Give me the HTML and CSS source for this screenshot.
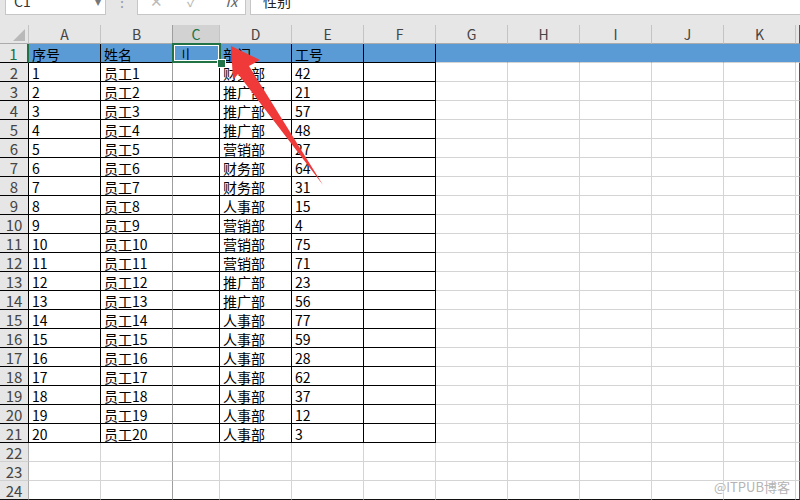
FILE: index.html
```html
<!DOCTYPE html>
<html lang="zh-CN">
<head>
    <meta charset="UTF-8">
    <title>工作簿</title>
    <link rel="stylesheet" href="styles.css">
</head>
<body>
    <div class="window">
        <div class="top">
            <div class="box name-box"><span class="cut">C1</span><span class="cut drop">▾</span></div>
            <div class="dots"><span class="cut">⋮</span></div>
            <div class="box fx-box">
                <span class="cut fx-btn">✕</span>
                <span class="cut fx-btn">✓</span>
                <span class="cut fx-btn fx">fx</span>
            </div>
            <div class="box input-box"><span class="cut">性别</span></div>
        </div>
        <table class="sheet">
            <colgroup>
                <col class="w-rh"><col class="w-a"><col class="w-a"><col class="w-c">
                <col class="w-a"><col class="w-a"><col class="w-a"><col class="w-a">
                <col class="w-a"><col class="w-a"><col class="w-a"><col class="w-a"><col class="w-l">
            </colgroup>
            <tr class="head">
                <th class="corner"><svg width="28" height="18" viewBox="0 0 28 18"><polygon points="25,4 25,16 13,16" fill="#b9b9b9"/></svg></th>
                <th class="ch">A</th><th class="ch b">B</th><th class="ch on">C</th><th class="ch">D</th><th class="ch">E</th><th class="ch">F</th>
                <th class="ch">G</th><th class="ch">H</th><th class="ch">I</th><th class="ch">J</th><th class="ch">K</th><th class="ch l"></th>
            </tr>
            <tr>
                <th class="rh k on">1</th>
                <td class="k hl">序号</td><td class="k hl">姓名</td><td class="k hl sel">刂</td><td class="k hl">部门</td><td class="k hl">工号</td><td class="k hl"></td>
                <td class="hl"></td><td class="hl"></td><td class="hl"></td><td class="hl"></td><td class="hl"></td><td class="hl l"></td>
            </tr>
            <tr><th class="rh k">2</th><td class="k">1</td><td class="k b">员工1</td><td class="k"></td><td class="k">财务部</td><td class="k">42</td><td class="k"></td><td></td><td></td><td></td><td></td><td></td><td class="l"></td></tr>
            <tr><th class="rh k">3</th><td class="k">2</td><td class="k b">员工2</td><td class="k"></td><td class="k">推广部</td><td class="k">21</td><td class="k"></td><td></td><td></td><td></td><td></td><td></td><td class="l"></td></tr>
            <tr><th class="rh k">4</th><td class="k">3</td><td class="k b">员工3</td><td class="k"></td><td class="k">推广部</td><td class="k">57</td><td class="k"></td><td></td><td></td><td></td><td></td><td></td><td class="l"></td></tr>
            <tr><th class="rh k">5</th><td class="k">4</td><td class="k b">员工4</td><td class="k"></td><td class="k">推广部</td><td class="k">48</td><td class="k"></td><td></td><td></td><td></td><td></td><td></td><td class="l"></td></tr>
            <tr><th class="rh k">6</th><td class="k">5</td><td class="k b">员工5</td><td class="k"></td><td class="k">营销部</td><td class="k">27</td><td class="k"></td><td></td><td></td><td></td><td></td><td></td><td class="l"></td></tr>
            <tr><th class="rh k">7</th><td class="k">6</td><td class="k b">员工6</td><td class="k"></td><td class="k">财务部</td><td class="k">64</td><td class="k"></td><td></td><td></td><td></td><td></td><td></td><td class="l"></td></tr>
            <tr><th class="rh k">8</th><td class="k">7</td><td class="k b">员工7</td><td class="k"></td><td class="k">财务部</td><td class="k">31</td><td class="k"></td><td></td><td></td><td></td><td></td><td></td><td class="l"></td></tr>
            <tr><th class="rh k">9</th><td class="k">8</td><td class="k b">员工8</td><td class="k"></td><td class="k">人事部</td><td class="k">15</td><td class="k"></td><td></td><td></td><td></td><td></td><td></td><td class="l"></td></tr>
            <tr><th class="rh k">10</th><td class="k">9</td><td class="k b">员工9</td><td class="k"></td><td class="k">营销部</td><td class="k">4</td><td class="k"></td><td></td><td></td><td></td><td></td><td></td><td class="l"></td></tr>
            <tr><th class="rh k">11</th><td class="k">10</td><td class="k b">员工10</td><td class="k"></td><td class="k">营销部</td><td class="k">75</td><td class="k"></td><td></td><td></td><td></td><td></td><td></td><td class="l"></td></tr>
            <tr><th class="rh k">12</th><td class="k">11</td><td class="k b">员工11</td><td class="k"></td><td class="k">营销部</td><td class="k">71</td><td class="k"></td><td></td><td></td><td></td><td></td><td></td><td class="l"></td></tr>
            <tr><th class="rh k">13</th><td class="k">12</td><td class="k b">员工12</td><td class="k"></td><td class="k">推广部</td><td class="k">23</td><td class="k"></td><td></td><td></td><td></td><td></td><td></td><td class="l"></td></tr>
            <tr><th class="rh k">14</th><td class="k">13</td><td class="k b">员工13</td><td class="k"></td><td class="k">推广部</td><td class="k">56</td><td class="k"></td><td></td><td></td><td></td><td></td><td></td><td class="l"></td></tr>
            <tr><th class="rh k">15</th><td class="k">14</td><td class="k b">员工14</td><td class="k"></td><td class="k">人事部</td><td class="k">77</td><td class="k"></td><td></td><td></td><td></td><td></td><td></td><td class="l"></td></tr>
            <tr><th class="rh k">16</th><td class="k">15</td><td class="k b">员工15</td><td class="k"></td><td class="k">人事部</td><td class="k">59</td><td class="k"></td><td></td><td></td><td></td><td></td><td></td><td class="l"></td></tr>
            <tr><th class="rh k">17</th><td class="k">16</td><td class="k b">员工16</td><td class="k"></td><td class="k">人事部</td><td class="k">28</td><td class="k"></td><td></td><td></td><td></td><td></td><td></td><td class="l"></td></tr>
            <tr><th class="rh k">18</th><td class="k">17</td><td class="k b">员工17</td><td class="k"></td><td class="k">人事部</td><td class="k">62</td><td class="k"></td><td></td><td></td><td></td><td></td><td></td><td class="l"></td></tr>
            <tr><th class="rh k">19</th><td class="k">18</td><td class="k b">员工18</td><td class="k"></td><td class="k">人事部</td><td class="k">37</td><td class="k"></td><td></td><td></td><td></td><td></td><td></td><td class="l"></td></tr>
            <tr><th class="rh k">20</th><td class="k">19</td><td class="k b">员工19</td><td class="k"></td><td class="k">人事部</td><td class="k">12</td><td class="k"></td><td></td><td></td><td></td><td></td><td></td><td class="l"></td></tr>
            <tr><th class="rh k">21</th><td class="k">20</td><td class="k b">员工20</td><td class="k"></td><td class="k">人事部</td><td class="k">3</td><td class="k"></td><td></td><td></td><td></td><td></td><td></td><td class="l"></td></tr>
            <tr><th class="rh">22</th><td></td><td class="b"></td><td></td><td></td><td></td><td></td><td></td><td></td><td></td><td></td><td></td><td class="l"></td></tr>
            <tr><th class="rh">23</th><td></td><td class="b"></td><td></td><td></td><td></td><td></td><td></td><td></td><td></td><td></td><td></td><td class="l"></td></tr>
            <tr class="end"><th class="rh">24</th><td></td><td class="b"></td><td></td><td></td><td></td><td></td><td></td><td></td><td></td><td></td><td></td><td class="l"></td></tr>
        </table>
        <svg class="arrow" width="800" height="500" viewBox="0 0 800 500">
            <polygon points="231,46 260,60 249,66 323,185 238,74 233,80" fill="#f03a3a"/>
        </svg>
        <div class="mark">@ITPUB博客</div>
    </div>
</body>
</html>
```

FILE: styles.css
```css
* {
    box-sizing: border-box;
}
body {
    margin: 0;
    font-family: "Noto Sans CJK SC", "Liberation Sans", sans-serif;
    background: #fff;
}
.window {
    width: 800px;
    height: 500px;
    overflow: hidden;
    position: relative;
}
.top {
    height: 25px;
    background: #e6e6e6;
    display: flex;
    align-items: flex-start;
    overflow: hidden;
}
.box {
    height: 15px;
    background: #fff;
    border: 1px solid #c6c6c6;
    border-top: none;
    overflow: hidden;
    display: flex;
    font-size: 14px;
    color: #333;
}
.cut {
    display: block;
    margin-top: -9px;
    line-height: 20px;
}
.name-box {
    width: 101px;
    margin-left: 5px;
    padding-left: 8px;
    justify-content: space-between;
}
.drop {
    color: #777;
    font-size: 12px;
    padding-right: 4px;
}
.dots {
    width: 31px;
    text-align: center;
    color: #999;
    font-size: 14px;
    overflow: hidden;
    height: 15px;
}
.fx-box {
    width: 109px;
    padding-left: 12px;
    gap: 24px;
    color: #bbb;
}
.fx-btn {
    font-size: 15px;
}
.fx {
    font-style: italic;
    color: #666;
    margin-left: 4px;
}
.input-box {
    flex: 1;
    margin-left: 4px;
    padding-left: 12px;
    border-right: none;
    color: #222;
}
.sheet {
    border-collapse: separate;
    border-spacing: 0;
    table-layout: fixed;
    width: 800px;
}
.w-rh { width: 29px; }
.w-a { width: 72px; }
.w-c { width: 47px; }
.w-l { width: 4px; }
th, td {
    padding: 0;
    font-weight: normal;
    white-space: nowrap;
    overflow: hidden;
}
td {
    height: 19px;
    border-right: 1px solid #d4d4d4;
    border-bottom: 1px solid #d4d4d4;
    padding: 2px 0 0 3px;
    line-height: 16px;
    font-size: 14px;
    color: #000;
    vertical-align: top;
}
.head th {
    height: 19px;
    background: #e6e6e6;
    border-right: 1px solid #c4c4c4;
    border-bottom: 1px solid #ababab;
    font-size: 14px;
    line-height: 18px;
    color: #444;
    text-align: center;
    vertical-align: top;
}
.head .on {
    background: #d2d2d2;
    color: #217346;
}
.corner svg {
    display: block;
}
.rh {
    height: 19px;
    background: #e6e6e6;
    border-right: 1px solid #ababab;
    border-bottom: 1px solid #d0d0d0;
    font-size: 15px;
    line-height: 16px;
    padding-top: 2px;
    color: #444;
    text-align: center;
    vertical-align: top;
}
.rh.k {
    border-right-color: #000;
}
.rh.on {
    color: #217346;
    border-right: 2px solid #217346;
}
.k {
    border-right-color: #000;
    border-bottom-color: #000;
}
td.b, .head .b {
    border-right-color: #9e9e9e;
}
.hl {
    background: #5b9bd5;
}
td.hl:not(.k) {
    border-right-color: #5b9bd5;
}
.sel {
    position: relative;
    overflow: visible;
}
.sel::after {
    content: "";
    position: absolute;
    left: -1px;
    top: -1px;
    right: -2px;
    bottom: -1px;
    border: 2px solid #217346;
    box-shadow: inset 0 0 0 1px #fff;
}
.sel::before {
    content: "";
    position: absolute;
    left: 44px;
    top: 15px;
    width: 7px;
    height: 7px;
    background: #217346;
    border: 1px solid #fff;
    z-index: 1;
}
.l, .head .l {
    border-right: 1px solid #555;
}
.end td, .end th {
    border-bottom-color: #111;
}
.arrow {
    position: absolute;
    left: 0;
    top: 0;
    pointer-events: none;
}
.mark {
    position: absolute;
    right: 10px;
    bottom: 5px;
    font-size: 13px;
    line-height: 16px;
    color: #b4b4b4;
    text-shadow: 0 0 2px #fff, 0 0 2px #fff;
}
```
